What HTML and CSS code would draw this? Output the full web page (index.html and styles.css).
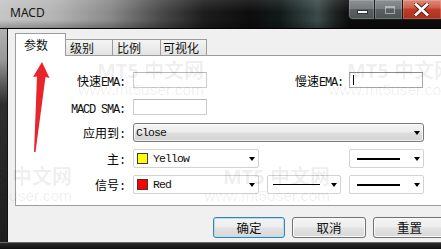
FILE: index.html
```html
<!DOCTYPE html>
<html>
<head>
<meta charset="utf-8">
<title>MACD</title>
<link rel="stylesheet" href="styles.css">
</head>
<body>
<div class="window">
  <div class="titlebar">
    <span class="title">MACD</span>
    <div class="caption">
      <div class="cap cap-min"><span class="min-glyph"></span></div>
      <div class="cap cap-max"><span class="max-glyph"></span></div>
      <div class="cap cap-close">
        <svg class="x-glyph" width="15" height="13" viewBox="0 0 15 13">
          <path d="M2 1.5 L13 11.5 M13 1.5 L2 11.5" stroke="#5a1a12" stroke-width="4.6" stroke-linecap="square"/>
          <path d="M2 1.5 L13 11.5 M13 1.5 L2 11.5" stroke="#ffffff" stroke-width="2.8" stroke-linecap="square"/>
        </svg>
      </div>
    </div>
  </div>
  <div class="middle">
    <div class="frame-left"></div>
    <div class="client">
      <div class="tabs">
        <div class="tab active">参数</div>
        <div class="tab t2">级别</div>
        <div class="tab t3">比例</div>
        <div class="tab t4">可视化</div>
      </div>
      <div class="panel">
        <div class="form">
          <div class="lbl r1">快速<span class="mono">EMA:</span></div>
          <div class="inp r1 c2"></div>
          <div class="lbl r1 c3 lbl-slow">慢速<span class="mono">EMA:</span></div>
          <div class="inp inp-focus r1 c4"><span class="caret"></span></div>

          <div class="lbl r2"><span class="mono">MACD SMA:</span></div>
          <div class="inp r2 c2"></div>

          <div class="lbl lbl-tall r3">应用到<span class="mono">:</span></div>
          <div class="sel combo r3 span3"><span class="val">Close</span><span class="drop"></span></div>

          <div class="lbl lbl-tall r4">主<span class="mono">:</span></div>
          <div class="sel r4 c2"><span class="sw sw-yellow"></span><span class="val">Yellow</span><span class="drop"></span></div>
          <div class="sel r4 c4"><span class="ln ln-thick"></span><span class="drop"></span></div>

          <div class="lbl lbl-tall r5">信号<span class="mono">:</span></div>
          <div class="sel r5 c2"><span class="sw sw-red"></span><span class="val">Red</span><span class="drop"></span></div>
          <div class="sel r5 c3"><span class="ln ln-thin"></span><span class="drop"></span></div>
          <div class="sel r5 c4"><span class="ln ln-thick"></span><span class="drop"></span></div>
        </div>
      </div>
      <div class="buttons">
        <div class="btn btn-default">确定</div>
        <div class="btn btn-cancel">取消</div>
        <div class="btn btn-reset">重置</div>
      </div>
    </div>
  </div>
  <div class="frame-bottom"></div>

  <svg class="arrow" width="60" height="160" viewBox="0 0 60 160">
    <polygon points="42,62 33,77 37,76.5 34,152 35.5,152 45.5,77 49.5,78" fill="#e8252a"/>
  </svg>

  <div class="wm wm-a"><div class="wm-big">MT5 中文网</div><div class="wm-url">www.mt5user.com</div></div>
  <div class="wm wm-b"><div class="wm-big">MT5 中文网</div><div class="wm-url">www.mt5user.com</div></div>
  <div class="wm wm-c"><div class="wm-big">MT5 中文网</div><div class="wm-url">www.mt5user.com</div></div>
  <div class="wm wm-d"><div class="wm-big">MT5 中文网</div><div class="wm-url">www.mt5user.com</div></div>
</div>
</body>
</html>
```

FILE: styles.css
```css
* { box-sizing: border-box; margin: 0; padding: 0; }

html, body {
  width: 441px;
  height: 249px;
  overflow: hidden;
  background: #151515;
}

body {
  font-family: "Noto Sans CJK SC", "Noto Sans", sans-serif;
  color: #000;
}

.window {
  position: relative;
  width: 441px;
  height: 249px;
  display: flex;
  flex-direction: column;
  overflow: hidden;
}

/* ---------- title bar ---------- */
.titlebar {
  height: 29px;
  flex: none;
  display: flex;
  align-items: flex-start;
  border-bottom: 1px solid #050505;
  background:
    linear-gradient(to bottom, rgba(255,255,255,0.10) 0, rgba(255,255,255,0) 12px, rgba(0,0,0,0) 20px, rgba(0,0,0,0.25) 28px),
    linear-gradient(to right, #c6c6c6 0, #b4b4b4 55px, #8a8a8a 110px, #4a4a4a 160px, #1c1c1c 205px, #0d0d0d 250px, #111a19 280px, #2c3b39 305px, #3c4b49 318px, #1d2322 335px, #0c0c0c 350px, #0c0c0c 441px);
}

.title {
  font: 12px/16px "Noto Sans", "Liberation Sans", sans-serif;
  color: #151515;
  margin: 5px 0 0 10px;
}

.caption {
  margin-left: auto;
  display: flex;
  height: 20px;
}

.cap {
  height: 20px;
  position: relative;
  border: 1px solid #1b1b1b;
  border-top: none;
  box-shadow: inset 0 0 0 1px rgba(255,255,255,0.18);
}

.cap-min {
  width: 27px;
  border-radius: 0 0 0 5px;
  background: linear-gradient(to bottom, #8b9092 0, #777c7e 45%, #5a5f61 50%, #4d5254 100%);
}

.cap-max {
  width: 28px;
  border-left: none;
  background: linear-gradient(to bottom, #8b9092 0, #777c7e 45%, #5a5f61 50%, #4d5254 100%);
}

.cap-close {
  width: 38px;
  border-left: none;
  border-right: none;
  background: linear-gradient(to bottom, #dd8c7c 0, #cf5f4c 40%, #bf3a27 50%, #a8321f 100%);
}

.min-glyph {
  position: absolute;
  left: 8px;
  top: 10px;
  width: 11px;
  height: 4px;
  background: #f4f4f4;
  border: 1px solid #333;
}

.max-glyph {
  position: absolute;
  left: 10px;
  top: 6px;
  width: 10px;
  height: 8px;
  border: 1px solid rgba(230,230,230,0.55);
  border-top-width: 2px;
}

.x-glyph {
  position: absolute;
  left: 11px;
  top: 3px;
}

/* ---------- body ---------- */
.middle {
  flex: 1;
  display: flex;
  min-height: 0;
}

.frame-left {
  width: 8px;
  flex: none;
  border-right: 1px solid #121212;
  background: linear-gradient(to bottom, #b2b2b2 0, #9a9a9a 30px, #5a5a5a 55px, #2e2e2e 75px, #1e1e1e 100%);
}

.client {
  flex: 1;
  background: #f0f0f0;
  padding: 4px 0 0 7px;
  display: flex;
  flex-direction: column;
}

.frame-bottom {
  height: 7px;
  flex: none;
  border-top: 1px solid #6a6a6a;
  background: linear-gradient(to bottom, #2a2a2a, #0e0e0e);
}

/* ---------- tabs ---------- */
.tabs {
  display: flex;
  align-items: flex-end;
  height: 22px;
  flex: none;
}

.tab {
  height: 16px;
  padding: 1px 0 0 4px;
  font-size: 12px;
  line-height: 14px;
  border: 1px solid #9c9c9c;
  border-bottom: none;
  margin-left: -1px;
  background: linear-gradient(to bottom, #f4f4f4, #e3e3e3);
  color: #111;
  white-space: nowrap;
}

.tab.active {
  position: relative;
  z-index: 1;
  width: 51px;
  height: 23px;
  margin-left: 0;
  margin-bottom: -1px;
  padding: 3px 0 0 8px;
  line-height: 16px;
  background: #fff;
}

.t2 { width: 48px; }
.t3 { width: 49px; }
.t4 { width: 47px; padding-left: 2px; }

/* ---------- panel ---------- */
.panel {
  width: 429px;
  height: 151px;
  flex: none;
  border: 1px solid #9c9c9c;
  background: #fff;
  padding-top: 16px;
}

.form {
  display: grid;
  grid-template-columns: 109px 126px 74px 75px;
  grid-template-rows: 27px 24px 26px 26px 19px;
  column-gap: 8px;
  align-items: start;
}

.r1 { grid-row: 1; }
.r2 { grid-row: 2; }
.r3 { grid-row: 3; }
.r4 { grid-row: 4; }
.r5 { grid-row: 5; }
.c2 { grid-column: 2; }
.c3 { grid-column: 3; }
.c4 { grid-column: 4; }
.span3 { grid-column: 2 / 5; }

.lbl {
  grid-column: 1;
  justify-self: end;
  padding-top: 1px;
  font-size: 12px;
  line-height: 16px;
  text-align: right;
  white-space: nowrap;
  color: #000;
}

.lbl.c3 { grid-column: 3; }
.lbl-slow { margin-right: -2px; }
.lbl-tall { line-height: 19px; padding-top: 0; }

.mono {
  font-family: "Liberation Mono", monospace;
  font-size: 12px;
  letter-spacing: -1.2px;
  color: #111;
}

.inp {
  width: 74px;
  height: 16px;
  border: 1px solid #cdcdcd;
  border-top-color: #b9b9b9;
  background: #fff;
  position: relative;
}

.inp-focus {
  border-color: #a8a8a8;
  border-top-color: #8c8c8c;
}

.caret {
  position: absolute;
  left: 3px;
  top: 2px;
  width: 1px;
  height: 10px;
  background: #000;
}

.sel {
  height: 19px;
  border: 1px solid #d2d2d2;
  border-radius: 2px;
  background: #fff;
  display: flex;
  align-items: center;
}

.combo {
  border: 1px solid #7a7a7a;
  border-radius: 3px;
  background: linear-gradient(to bottom, #f4f4f4 0, #ececec 48%, #dedede 52%, #d3d3d3 100%);
  box-shadow: inset 0 0 0 1px rgba(255,255,255,0.7);
}

.val {
  font-family: "Liberation Mono", monospace;
  font-size: 11.5px;
  letter-spacing: -0.9px;
  color: #111;
  margin-left: 2px;
}

.sw + .val { margin-left: 5px; }

.sw {
  width: 11px;
  height: 11px;
  margin-left: 3px;
  border: 1px solid #3a3a3a;
  flex: none;
}

.sw-yellow { background: #ffff00; }
.sw-red { background: #ff0000; }

.drop {
  margin-left: auto;
  margin-right: 3px;
  width: 0;
  height: 0;
  border-left: 3.5px solid transparent;
  border-right: 3.5px solid transparent;
  border-top: 4px solid #000;
}

.ln {
  background: #000;
  flex: none;
}

.ln-thick { width: 43px; height: 2px; margin-left: 7px; }
.ln-thin { width: 47px; height: 1px; margin-left: 5px; }

/* ---------- buttons ---------- */
.buttons {
  display: flex;
  gap: 7px;
  margin-top: 11px;
  padding-left: 198px;
}

.btn {
  height: 21px;
  flex: none;
  border: 1px solid #707070;
  border-radius: 3px;
  background: linear-gradient(to bottom, #f4f4f4 0, #ededed 48%, #e2e2e2 52%, #d8d8d8 100%);
  box-shadow: inset 0 0 0 1px #fbfbfb;
  font-size: 12.5px;
  line-height: 19px;
  text-align: center;
  color: #111;
}

.btn-default {
  width: 72px;
  border-color: #3c7fb1;
  box-shadow: inset 0 0 0 1px #aee1f8;
}

.btn-cancel { width: 74px; }
.btn-reset { width: 73px; }

/* ---------- overlays ---------- */
.arrow {
  position: absolute;
  left: 0;
  top: 0;
}

.wm {
  position: absolute;
  width: 134px;
  text-align: right;
  color: rgba(0,0,0,0.07);
  font-weight: bold;
  pointer-events: none;
  white-space: nowrap;
}

.wm-big {
  font-family: "Noto Sans", "Noto Sans CJK SC", sans-serif;
  font-size: 20px;
  line-height: 22px;
}

.wm-url {
  font-family: "Liberation Sans", sans-serif;
  font-size: 15.5px;
  line-height: 16px;
  font-weight: normal;
}

.wm-a { left: 70px; top: 60px; }
.wm-b { left: 320px; top: 60px; }
.wm-c { left: -62px; top: 166px; }
.wm-d { left: 196px; top: 166px; }
```
